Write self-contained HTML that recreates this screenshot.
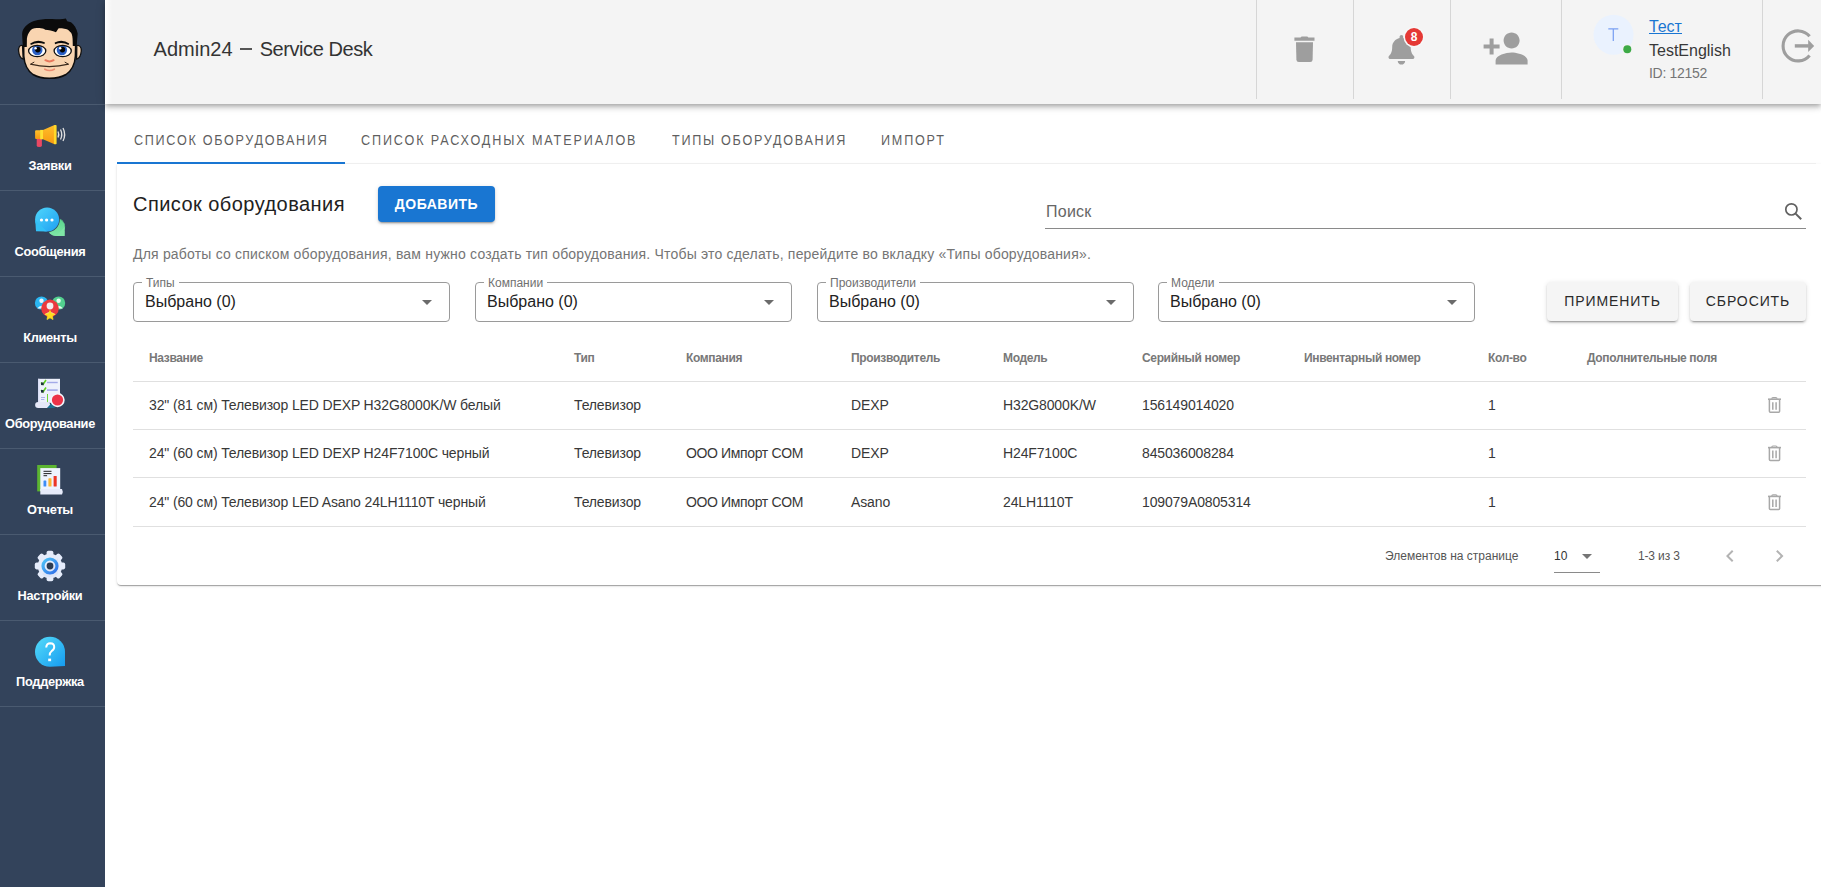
<!DOCTYPE html>
<html>
<head>
<meta charset="utf-8">
<style>
*{box-sizing:border-box;margin:0;padding:0}
html,body{width:1821px;height:887px;overflow:hidden;background:#fff;font-family:"Liberation Sans",sans-serif;color:#212121}
.a{position:absolute;white-space:nowrap;line-height:1}
#side{position:absolute;left:0;top:0;width:105px;height:887px;background:#33435b}
.div{position:absolute;left:0;width:105px;height:1px;background:#4a5a70}
.lbl{position:absolute;left:0;width:100px;text-align:center;color:#fff;font-weight:bold;font-size:12.8px;line-height:1;letter-spacing:-0.3px}
#hdr{position:absolute;left:105px;top:0;width:1716px;height:104px;background:#f4f4f4;box-shadow:0 2px 4px -1px rgba(0,0,0,.2),0 4px 5px 0 rgba(0,0,0,.14),0 1px 10px 0 rgba(0,0,0,.12)}
.vd{position:absolute;top:0;width:1px;height:99px;background:#d6d6d6}
#card{position:absolute;left:117px;top:164px;width:1712px;height:421px;background:#fff;border-radius:0 0 4px 4px;box-shadow:0 2px 1px -1px rgba(0,0,0,.2),0 1px 1px 0 rgba(0,0,0,.14),0 1px 3px 0 rgba(0,0,0,.12)}
.tab{position:absolute;top:133px;font-size:14px;letter-spacing:0.8px;color:#5f5f5f;transform:scaleX(0.9);transform-origin:0 0}
.sel{position:absolute;top:282px;width:317px;height:40px;border:1px solid #9a9a9a;border-radius:4px}
.sel .l{position:absolute;top:-6px;left:8px;padding:0 4px;background:#fff;font-size:12px;line-height:12px;color:#707070}
.sel .v{position:absolute;left:11px;top:10.5px;font-size:16px;line-height:1;color:#222}
.sel .arr{position:absolute;left:288px;top:17px;width:0;height:0;border-left:5px solid transparent;border-right:5px solid transparent;border-top:5px solid #6b6b6b}
.btn{position:absolute;top:282px;height:39px;background:#f5f5f5;border-radius:4px;box-shadow:0 3px 1px -2px rgba(0,0,0,.2),0 2px 2px 0 rgba(0,0,0,.14),0 1px 5px 0 rgba(0,0,0,.12);font-size:14px;letter-spacing:0.9px;color:#2a2a2a;display:flex;align-items:center;justify-content:center;line-height:1;padding-bottom:2px}
.th{position:absolute;top:351.8px;font-size:12px;font-weight:bold;color:#787878;letter-spacing:-0.35px;line-height:1;white-space:nowrap}
.td{position:absolute;font-size:14px;color:#383838;letter-spacing:-0.13px;line-height:1;white-space:nowrap}
.hl{position:absolute;left:133px;width:1673px;height:1px;background:#e0e0e0}
</style>
</head>
<body>
<div id="side">

<svg style="position:absolute;left:0;top:0" width="105" height="720" viewBox="0 0 105 720">
  <defs>
    <linearGradient id="gOr" x1="0" y1="0" x2="0" y2="1"><stop offset="0" stop-color="#ffbf2a"/><stop offset="1" stop-color="#f79a12"/></linearGradient>
    <linearGradient id="gBl" x1="0" y1="0" x2="1" y2="1"><stop offset="0" stop-color="#4fd6fb"/><stop offset="1" stop-color="#1e9ff2"/></linearGradient>
    <linearGradient id="gGr" x1="0" y1="0" x2="0" y2="1"><stop offset="0" stop-color="#58d68c"/><stop offset="1" stop-color="#7fe6a6"/></linearGradient>
    <linearGradient id="gRing" x1="0" y1="0" x2="1" y2="1"><stop offset="0" stop-color="#4ec3f7"/><stop offset="1" stop-color="#2f6ee8"/></linearGradient>
    <linearGradient id="gQ" x1="0" y1="0" x2="1" y2="1"><stop offset="0" stop-color="#55dcfa"/><stop offset="1" stop-color="#159bf0"/></linearGradient>
  </defs>
  <!-- logo face -->
  <g>
    <defs><clipPath id="eyeL"><ellipse cx="37.2" cy="51" rx="8.3" ry="5.3"/></clipPath><clipPath id="eyeR"><ellipse cx="62.7" cy="51" rx="8.3" ry="5.3"/></clipPath></defs>
    <path d="M22.5 45.5 C19.5 44.5 18.3 48 18.6 51 C19 55 20.5 58.5 23.2 59.2 Z" fill="#f9d5b1" stroke="#111" stroke-width="1.3"/>
    <path d="M76.8 45.5 C79.8 44.5 81.6 48 81.3 51 C80.9 55 79.4 58.5 76.6 59.2 Z" fill="#f9d5b1" stroke="#111" stroke-width="1.3"/>
    <path d="M23.6 36 C24 28 34 24 49.5 24 C66 24 75.6 28 75.8 36 L75.4 56 C74.8 66 71 71 66 74.5 C61 77.5 55 78.3 49.3 78.3 C44 78.3 38 77.5 33 74.5 C28 71 24.5 66 23.8 56 Z" fill="#f9d5b1" stroke="#0d0d0d" stroke-width="1.5"/>
    <path d="M22.9 47 L22.1 34 C22.5 28 27 23.5 34 21 C40 19.2 46 18.8 52 19 C57 19.2 61.5 19.8 65.9 18.6 L67.2 21.3 L71 22.3 C74 24.5 76.8 28.5 77.7 33.5 L76.6 46 L72.8 46 L72.6 38.7 C72.4 35 71.5 32.8 70.2 32 C68.5 29.8 66.5 28.8 64.3 28.8 C62 28.3 59.5 28.2 58.4 28.4 L56 32.2 C52.5 30.8 48.5 29.8 45 29.7 L44.3 28.9 C41.5 28.2 38.5 27.9 36.7 28.1 C33.5 28.4 31.5 29.4 30.6 30.2 C28.2 33 27.2 36 26.9 38.7 L26.8 47 Z" fill="#0b0b0b"/>
    <path d="M30.2 43.6 Q36.7 38.6 44.8 42.2 L44.5 44.1 Q37 41.4 30.9 45 Z" fill="#0b0b0b"/>
    <path d="M54.7 42.4 Q62.6 38.6 69.2 43.6 L68.5 45 Q62.4 41.4 55 44.2 Z" fill="#0b0b0b"/>
    <ellipse cx="37.2" cy="51" rx="8.3" ry="5.3" fill="#fff"/>
    <ellipse cx="62.7" cy="51" rx="8.3" ry="5.3" fill="#fff"/>
    <g clip-path="url(#eyeL)"><circle cx="37.3" cy="50" r="5.2" fill="#2b60c6"/><circle cx="37.8" cy="49.6" r="2.8" fill="#050505"/><circle cx="35.6" cy="48.3" r="1.2" fill="#fff"/></g>
    <g clip-path="url(#eyeR)"><circle cx="61.9" cy="50" r="5.2" fill="#2b60c6"/><circle cx="62.4" cy="49.6" r="2.8" fill="#050505"/><circle cx="60.2" cy="48.3" r="1.2" fill="#fff"/></g>
    <ellipse cx="37.2" cy="51" rx="8.6" ry="5.6" fill="none" stroke="#111" stroke-width="1.3"/>
    <ellipse cx="62.7" cy="51" rx="8.6" ry="5.6" fill="none" stroke="#111" stroke-width="1.3"/>
    <path d="M45.4 60.2 Q49.5 62.6 53.6 60.2" fill="none" stroke="#e8785c" stroke-width="2" stroke-linecap="round"/>
    <path d="M30.4 64.2 Q49.3 69 68.6 64.2" fill="none" stroke="#3b2b1e" stroke-width="1.3"/>
    <path d="M30.4 64.3 L34.3 62 M64.7 62 L68.6 64.3" fill="none" stroke="#3b2b1e" stroke-width="1"/>
    <path d="M44.8 69.2 Q49.6 71.8 54.4 69.2" fill="none" stroke="#ec8b70" stroke-width="1.6" stroke-linecap="round"/>
  </g>
  <!-- megaphone -->
  <g>
    <path d="M36.7 138.9 L41.9 138.9 L41.9 145.5 Q41.9 147 39.3 147 Q36.7 147 36.7 145.5 Z" fill="#ea4863"/>
    <rect x="35.1" y="130.3" width="5.5" height="8.6" rx="1" fill="url(#gOr)"/>
    <rect x="40.1" y="129.9" width="3" height="9.4" fill="#ffe033"/>
    <path d="M43 129.9 L54.5 124.9 L54.5 144.3 L43 139.3 Z" fill="url(#gOr)"/>
    <rect x="53.9" y="124.9" width="2.7" height="19.4" rx="0.8" fill="#ffd92a"/>
    <path d="M58 131.5 Q59.5 134.5 58 137.5" fill="none" stroke="#e0e0e0" stroke-width="1.3"/>
    <path d="M60.5 129.5 Q63 134.5 60.5 139.5" fill="none" stroke="#e0e0e0" stroke-width="1.3"/>
    <path d="M63 128 Q66.3 134.5 63 141" fill="none" stroke="#e0e0e0" stroke-width="1.3"/>
  </g>
  <!-- messages -->
  <g>
    <path d="M56.1 218 A9 9 0 1 1 49 232.5 L64.2 236 L64.7 226 A9 9 0 0 0 56.1 218Z" fill="url(#gGr)"/>
    <circle cx="56" cy="227" r="8.8" fill="url(#gGr)"/>
    <path d="M64.7 227 L64.7 236 L56 236 Z" fill="#7fe6a6"/>
    <circle cx="47.1" cy="219.5" r="12.7" fill="#33435b"/><path d="M34.5 220 L35.2 232.3 L47 232.6 Z" fill="#33435b"/>
    <circle cx="47.1" cy="219.5" r="12" fill="url(#gBl)"/>
    <path d="M35.2 220 L36 231.2 L47 231.5 Z" fill="#33c0f6"/>
    <circle cx="41.5" cy="220" r="1.6" fill="#fff"/>
    <circle cx="46.6" cy="220" r="1.6" fill="#fff"/>
    <circle cx="52" cy="220" r="1.6" fill="#fff"/>
  </g>
  <!-- clients -->
  <g>
    <circle cx="41.5" cy="303" r="6.6" fill="#2ab6f2"/>
    <circle cx="58.6" cy="303" r="6.6" fill="#52d08f"/>
    <circle cx="41.5" cy="300.8" r="2.2" fill="#e8f6ff"/>
    <circle cx="58.6" cy="300.8" r="2.2" fill="#e8fff2"/>
    <path d="M37.2 308.5 Q41.5 302.8 45.8 308.5Z" fill="#e8f6ff"/><path d="M54.3 308.5 Q58.6 302.8 62.9 308.5Z" fill="#e8fff2"/>
    <circle cx="50" cy="308.4" r="8.8" fill="#ea3a3e"/>
    <circle cx="50" cy="306" r="3.4" fill="#f4eef0"/>
    <path d="M44.5 315 Q50 309 55.5 315Z" fill="#f4eef0"/>
    <path d="M50 310.5 L51.5 313.6 L54.8 314 L52.3 316.2 L53 319.5 L50 317.8 L47 319.5 L47.7 316.2 L45.2 314 L48.5 313.6 Z" fill="#ffdc1e" stroke="#ffdc1e" stroke-width="0.8" stroke-linejoin="round"/>
  </g>
  <!-- equipment -->
  <g>
    <rect x="38" y="378.8" width="22" height="24" fill="#eef1fc"/>
    <rect x="38" y="378.8" width="1.5" height="24" fill="#d9def5"/>
    <path d="M41 382.5 L43 384.5 L46 380" fill="none" stroke="#5fd11e" stroke-width="1.6"/>
    <rect x="41" y="382.5" width="2.6" height="2.6" fill="#203040"/>
    <path d="M41 390 L43 392 L46 387.5" fill="none" stroke="#5fd11e" stroke-width="1.6"/>
    <rect x="41" y="390" width="2.6" height="2.6" fill="#203040"/>
    <rect x="47" y="381.8" width="10.7" height="1.4" fill="#a3aae8"/>
    <rect x="47" y="389.3" width="10.7" height="1.6" fill="#a3aae8"/>
    <rect x="41" y="397" width="4" height="0.9" fill="#a3aae8"/>
    <rect x="41" y="399" width="3.4" height="0.9" fill="#a3aae8"/>
    <path d="M47.5 394 L47.5 405" stroke="#5fd11e" stroke-width="0.9"/>
    <rect x="35.1" y="402" width="15" height="6" rx="3" fill="#e6e8f8"/>
    <path d="M47 408 L52 402.5 L55 408Z" fill="#1b6e8e"/>
    <circle cx="57.5" cy="400" r="7.2" fill="#f4f6fc"/>
    <circle cx="57.5" cy="400" r="5.6" fill="#ec3348"/>
  </g>
  <!-- reports -->
  <g>
    <rect x="37.2" y="465" width="19.4" height="26.4" fill="#5cb531"/>
    <rect x="40.3" y="468.1" width="19.9" height="23" fill="#eef3fd"/>
    <path d="M40.3 489 L62 489 Q63.5 491.8 62 494.5 L40.3 494.5 Z" fill="#e6ebfa"/>
    <rect x="43.5" y="470.8" width="8" height="1" fill="#222"/>
    <rect x="43.5" y="473.1" width="8" height="1" fill="#222"/>
    <rect x="43.5" y="475.2" width="3.6" height="1" fill="#222"/>
    <rect x="43.5" y="480.5" width="2.8" height="6.1" rx="0.6" fill="#3d8df5"/>
    <rect x="48.4" y="478.3" width="3.1" height="8.3" rx="0.6" fill="#fbb832"/>
    <rect x="53.6" y="476" width="3.1" height="10.6" rx="0.6" fill="#ec3524"/>
  </g>
  <!-- settings gear -->
  <g transform="translate(50 566)">
    <g fill="#e5ecfb">
      <circle r="12.2"/>
      <rect x="-3.4" y="-15.2" width="6.8" height="30.4" rx="1.8"/>
      <rect x="-3.4" y="-15.2" width="6.8" height="30.4" rx="1.8" transform="rotate(45)"/>
      <rect x="-3.4" y="-15.2" width="6.8" height="30.4" rx="1.8" transform="rotate(90)"/>
      <rect x="-3.4" y="-15.2" width="6.8" height="30.4" rx="1.8" transform="rotate(135)"/>
    </g>
    <path d="M8 8 A11.5 11.5 0 0 1 -8 8 L8 -8Z" fill="#d3dcf3" opacity="0.5"/>
    <circle r="7" fill="none" stroke="url(#gRing)" stroke-width="3.2"/>
    <circle r="3.4" fill="#2c3b52"/>
  </g>
  <!-- support -->
  <g>
    <path d="M50 636.8 A15 15 0 0 1 65 651.8 L65 666 L50 666.8 A15 15 0 0 1 50 636.8Z" fill="url(#gQ)"/>
    <path d="M46.2 647.5 Q46.5 643.2 50.3 643.2 Q54.2 643.3 54.2 647 Q54.2 649.6 51.5 651.2 Q49.7 652.5 49.7 655.5" fill="none" stroke="#fff" stroke-width="2"/>
    <rect x="48.2" y="658.6" width="2.9" height="2.6" fill="#fff"/>
  </g>
</svg>
  <div class="div" style="top:104px"></div>
  <div class="div" style="top:190px"></div>
  <div class="div" style="top:276px"></div>
  <div class="div" style="top:362px"></div>
  <div class="div" style="top:448px"></div>
  <div class="div" style="top:534px"></div>
  <div class="div" style="top:620px"></div>
  <div class="div" style="top:706px"></div>
  <div class="lbl" style="top:160.2px">Заявки</div>
  <div class="lbl" style="top:246.2px">Сообщения</div>
  <div class="lbl" style="top:332.2px">Клиенты</div>
  <div class="lbl" style="top:418.2px">Оборудование</div>
  <div class="lbl" style="top:504.2px">Отчеты</div>
  <div class="lbl" style="top:590.2px">Настройки</div>
  <div class="lbl" style="top:676.2px">Поддержка</div>
</div>

<div id="hdr">
  <div style="position:absolute;left:0;top:0;width:7px;height:104px;background:linear-gradient(90deg,#fff,#f4f4f4)"></div>
  <div class="a" style="left:48.6px;top:39px;font-size:20px;color:#333">Admin24</div><div style="position:absolute;left:134.9px;top:48.3px;width:12.5px;height:1.3px;background:#555"></div><div class="a" style="left:154.7px;top:39px;font-size:20px;letter-spacing:-0.43px;color:#333">Service Desk</div>
  <div class="vd" style="left:1151px"></div>
  <div class="vd" style="left:1248px"></div>
  <div class="vd" style="left:1345px"></div>
  <div class="vd" style="left:1456px"></div>
  <div class="vd" style="left:1657px"></div>

<svg style="position:absolute;left:1145px;top:0" width="676" height="104" viewBox="1250 0 676 104">
  <!-- trash -->
  <path d="M1294.4 37.6 L1300.5 37.6 L1301.6 36.6 L1307.3 36.6 L1308.4 37.6 L1314.5 37.6 L1314.5 40.8 L1294.4 40.8 Z" fill="#9e9e9e"/>
  <path d="M1296 42.2 L1313 42.2 L1312.6 59.8 Q1312.5 62.1 1310.2 62.1 L1298.8 62.1 Q1296.5 62.1 1296.4 59.8 Z" fill="#9e9e9e"/>
  <!-- bell (FA) -->
  <g transform="translate(1388.5 35) scale(0.0578)" fill="#9e9e9e">
    <path d="M224 512c35.32 0 63.97-28.65 63.97-64H160.03c0 35.35 28.65 64 63.97 64zm215.39-149.71c-19.32-20.76-55.47-51.99-55.47-154.29 0-77.7-54.48-139.9-127.94-155.16V32c0-17.67-14.32-32-31.98-32s-31.980 14.33-31.98 32v20.84C118.56 68.1 64.08 130.3 64.08 208c0 102.3-36.15 133.53-55.47 154.290-6 6.45-8.66 14.16-8.61 21.71.11 16.4 12.98 32 32.1 32h383.8c19.12 0 32-15.6 32.1-32 .05-7.55-2.61-15.27-8.61-21.71z"/>
  </g>
  <circle cx="1414" cy="37" r="10.5" fill="#f7f7f7"/>
  <circle cx="1414" cy="37" r="9" fill="#e53935"/>
  <text x="1414" y="41.3" text-anchor="middle" font-family="Liberation Sans" font-size="12" font-weight="bold" fill="#fff">8</text>
  <!-- person add (material 48px) -->
  <g transform="translate(1481.6 24.6) scale(2)" fill="#9e9e9e">
    <path d="M15 12c2.21 0 4-1.79 4-4s-1.79-4-4-4-4 1.79-4 4 1.79 4 4 4zm-9-2V7H4v3H1v2h3v3h2v-3h3v-2H6zm9 4c-2.67 0-8 1.34-8 4v2h16v-2c0-2.66-5.330-4-8-4z"/>
  </g>
  <!-- avatar -->
  <circle cx="1613.5" cy="34.7" r="20" fill="#eaf2fe"/>
  <path d="M1608.3 28.9 L1618.3 28.9 M1613.3 28.9 L1613.3 41" stroke="#7aa0f2" stroke-width="1.25" fill="none"/>
  <circle cx="1627.3" cy="49.3" r="5.2" fill="#f4f4f4"/>
  <circle cx="1627.3" cy="49.3" r="4" fill="#3daa46"/>
  <!-- logout -->
  <path d="M1809.6 36.3 A15 15 0 1 0 1809.6 55.5" fill="none" stroke="#9e9e9e" stroke-width="3.1"/>
  <rect x="1794.8" y="44.2" width="14" height="3.4" fill="#9e9e9e"/>
  <path d="M1808.2 39.8 L1814.2 45.9 L1808.2 51.9 Z" fill="#9e9e9e"/>
</svg>
<div class="a" style="left:1544px;top:18.6px;font-size:16px;letter-spacing:-0.1px;color:#1976d2">Тест</div><div style="position:absolute;left:1544px;top:32.6px;width:33px;height:1.2px;background:#1976d2"></div>
<div class="a" style="left:1544px;top:43px;font-size:16px;color:#383838">TestEnglish</div>
<div class="a" style="left:1544px;top:66px;font-size:14px;letter-spacing:-0.3px;color:#757575">ID: 12152</div>
</div>

<div id="card"></div>

<!-- tabs -->
<div class="a tab" style="left:133.5px;letter-spacing:1.901px">СПИСОК ОБОРУДОВАНИЯ</div>
<div class="a tab" style="left:361px;letter-spacing:2.089px">СПИСОК РАСХОДНЫХ МАТЕРИАЛОВ</div>
<div class="a tab" style="left:671.5px;letter-spacing:1.914px">ТИПЫ ОБОРУДОВАНИЯ</div>
<div class="a tab" style="left:880.5px;letter-spacing:1.998px">ИМПОРТ</div>
<div style="position:absolute;left:117px;top:162.5px;width:1699px;height:1.5px;background:#efefef"></div>
<div style="position:absolute;left:117px;top:162px;width:228px;height:2px;background:#1976d2"></div>

<div class="a" style="left:133px;top:194.4px;font-size:20px;letter-spacing:0.45px;color:#212121">Список оборудования</div>
<div style="position:absolute;left:378px;top:186px;width:117px;height:36px;background:#1976d2;border-radius:4px;box-shadow:0 3px 1px -2px rgba(0,0,0,.2),0 2px 2px 0 rgba(0,0,0,.14),0 1px 5px 0 rgba(0,0,0,.12);color:#fff;font-weight:bold;font-size:14px;letter-spacing:0.5px;display:flex;align-items:center;justify-content:center;line-height:1">ДОБАВИТЬ</div>

<div class="a" style="left:1046px;top:203.5px;font-size:16px;letter-spacing:0.25px;color:#666">Поиск</div>
<div style="position:absolute;left:1045px;top:228px;width:761px;height:1px;background:#8a8a8a"></div>

<div class="a" style="left:133px;top:247.4px;font-size:14px;letter-spacing:0.19px;color:#757575">Для работы со списком оборудования, вам нужно создать тип оборудования. Чтобы это сделать, перейдите во вкладку «Типы оборудования».</div>

<div class="sel" style="left:133px"><span class="l">Типы</span><span class="v">Выбрано (0)</span><span class="arr"></span></div>
<div class="sel" style="left:475px"><span class="l">Компании</span><span class="v">Выбрано (0)</span><span class="arr"></span></div>
<div class="sel" style="left:817px"><span class="l">Производители</span><span class="v">Выбрано (0)</span><span class="arr"></span></div>
<div class="sel" style="left:1158px"><span class="l">Модели</span><span class="v">Выбрано (0)</span><span class="arr"></span></div>

<div class="btn" style="left:1547px;width:131px">ПРИМЕНИТЬ</div>
<div class="btn" style="left:1690px;width:116px">СБРОСИТЬ</div>

<!-- table -->
<div class="th" style="left:149px">Название</div>
<div class="th" style="left:574px">Тип</div>
<div class="th" style="left:686px">Компания</div>
<div class="th" style="left:851px">Производитель</div>
<div class="th" style="left:1003px">Модель</div>
<div class="th" style="left:1142px">Серийный номер</div>
<div class="th" style="left:1304px">Инвентарный номер</div>
<div class="th" style="left:1488px">Кол-во</div>
<div class="th" style="left:1587px">Дополнительные поля</div>
<div class="hl" style="top:381px"></div>
<div class="hl" style="top:429px"></div>
<div class="hl" style="top:477px"></div>
<div class="hl" style="top:526px"></div>

<div class="td" style="left:149px;top:398.1px">32" (81 см) Телевизор LED DEXP H32G8000K/W белый</div>
<div class="td" style="left:574px;top:398.1px">Телевизор</div>
<div class="td" style="left:851px;top:398.1px">DEXP</div>
<div class="td" style="left:1003px;top:398.1px">H32G8000K/W</div>
<div class="td" style="left:1142px;top:398.1px">156149014020</div>
<div class="td" style="left:1488px;top:398.1px">1</div>

<div class="td" style="left:149px;top:446px">24" (60 см) Телевизор LED DEXP H24F7100C черный</div>
<div class="td" style="left:574px;top:446px">Телевизор</div>
<div class="td" style="left:686px;top:446px;letter-spacing:-0.36px">ООО Импорт COM</div>
<div class="td" style="left:851px;top:446px">DEXP</div>
<div class="td" style="left:1003px;top:446px">H24F7100C</div>
<div class="td" style="left:1142px;top:446px">845036008284</div>
<div class="td" style="left:1488px;top:446px">1</div>

<div class="td" style="left:149px;top:495px">24" (60 см) Телевизор LED Asano 24LH1110T черный</div>
<div class="td" style="left:574px;top:495px">Телевизор</div>
<div class="td" style="left:686px;top:495px;letter-spacing:-0.36px">ООО Импорт COM</div>
<div class="td" style="left:851px;top:495px">Asano</div>
<div class="td" style="left:1003px;top:495px">24LH1110T</div>
<div class="td" style="left:1142px;top:495px">109079A0805314</div>
<div class="td" style="left:1488px;top:495px">1</div>

<!-- pagination -->
<div class="a" style="left:1385px;top:550.2px;font-size:12px;color:#555">Элементов на странице</div>
<div class="a" style="left:1554px;top:550.2px;font-size:12px;color:#333">10</div>
<div style="position:absolute;left:1582px;top:554px;width:0;height:0;border-left:5px solid transparent;border-right:5px solid transparent;border-top:5px solid #757575"></div>
<div style="position:absolute;left:1554px;top:572px;width:46px;height:1px;background:#8a8a8a"></div>
<div class="a" style="left:1638px;top:550.2px;font-size:12px;color:#555;letter-spacing:-0.15px">1-3 из 3</div>


<!-- search icon -->
<svg style="position:absolute;left:1780px;top:198px" width="30" height="28" viewBox="1780 198 30 28">
  <circle cx="1791.4" cy="209.4" r="5.6" fill="none" stroke="#616161" stroke-width="1.7"/>
  <path d="M1795.6 213.6 L1801.2 219.2" stroke="#616161" stroke-width="2" stroke-linecap="butt"/>
</svg>
<!-- row trash icons -->
<svg style="position:absolute;left:1760px;top:390px" width="30" height="130" viewBox="1760 390 30 130">
  <g id="rt" fill="none" stroke="#a8a8a8">
    <path d="M1768 399.2 L1781 399.2" stroke-width="1.6"/>
    <path d="M1771.8 398.8 Q1771.8 397.6 1773 397.6 L1775.8 397.6 Q1777 397.6 1777 398.8" stroke-width="1.2"/>
    <path d="M1769.4 399.5 L1769.4 411.2 Q1769.4 412.2 1770.4 412.2 L1778.6 412.2 Q1779.6 412.2 1779.6 411.2 L1779.6 399.5" stroke-width="1.5"/>
    <path d="M1772.8 402.2 L1772.8 409.8 M1776.1 402.2 L1776.1 409.8" stroke-width="1.5"/>
  </g>
  <use href="#rt" transform="translate(0 48.4)"/>
  <use href="#rt" transform="translate(0 97.2)"/>
</svg>
<!-- chevrons -->
<svg style="position:absolute;left:1718px;top:544px" width="74" height="24" viewBox="0 0 74 24" fill="#b3b3b3">
  <path d="M15.41 7.41L14 6l-6 6 6 6 1.41-1.41L10.83 12z"/>
  <path transform="translate(49.5 0)" d="M10 6L8.59 7.41 13.17 12l-4.58 4.59L10 18l6-6z"/>
</svg>
</body>
</html>
